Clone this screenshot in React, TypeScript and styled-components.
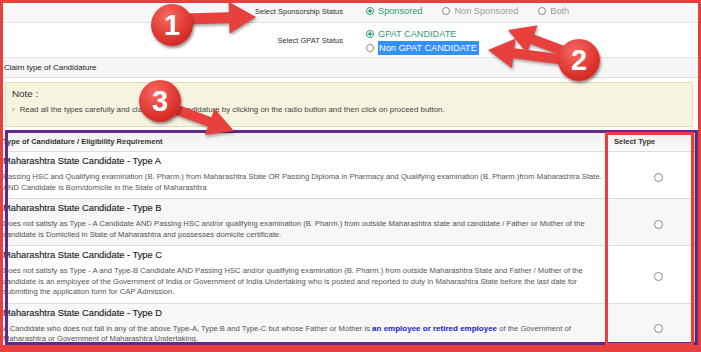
import React from "react";
import styled, { createGlobalStyle, css } from "styled-components";

const GlobalStyle = createGlobalStyle`
  html, body { margin: 0; padding: 0; background: #fff; }
  body { font-family: "Liberation Sans", Arial, sans-serif; }
`;

const GREEN = "#2f9d74";
const RED = "#e8403d";

const Page = styled.div`
  position: relative;
  width: 701px;
  height: 352px;
  overflow: hidden;
  background: #fff;
`;

const StatusRow = styled.div<{ $tone?: "gray"; $height: number }>`
  display: grid;
  grid-template-columns: 350px 1fr;
  height: ${({ $height }) => $height}px;
  box-sizing: border-box;
  border-bottom: 1px solid #e2e2e2;
  background: ${({ $tone }) => ($tone === "gray" ? "#f7f7f7" : "#fff")};
`;

const Label = styled.div`
  align-self: center;
  text-align: right;
  padding-right: 7px;
  font-size: 7.5px;
  color: #333;
`;

const Options = styled.div<{ $stacked?: boolean }>`
  display: flex;
  padding-left: 16px;
  ${({ $stacked }) =>
    $stacked
      ? css`
          flex-direction: column;
          padding-top: 4px;
        `
      : css`
          align-items: center;
          gap: 20px;
        `}
`;

const Option = styled.label<{ $checked?: boolean }>`
  display: inline-flex;
  align-items: center;
  gap: 4px;
  font-size: 9.2px;
  line-height: 14px;
  color: ${({ $checked }) => ($checked ? GREEN : "#9a9a9a")};
`;

const Radio = styled.span<{ $checked?: boolean }>`
  display: inline-block;
  flex: none;
  box-sizing: border-box;
  width: 8px;
  height: 8px;
  border-radius: 50%;
  border: 1.5px solid ${({ $checked }) => ($checked ? GREEN : "#888")};
  background: ${({ $checked }) =>
    $checked ? `radial-gradient(circle, ${GREEN} 0 1.4px, #fff 1.9px)` : "#fff"};
`;

const Selected = styled.span`
  background: #3390ff;
  color: #fff;
  padding: 0 2px 0 1px;
`;

const ClaimBar = styled.div`
  height: 20px;
  box-sizing: border-box;
  padding-left: 4px;
  line-height: 19px;
  font-size: 8px;
  color: #222;
  background: #f6f6f6;
  border-bottom: 1px solid #dcdcdc;
`;

const NoteBox = styled.div`
  margin: 4px 8px 0 5px;
  height: 45px;
  box-sizing: border-box;
  padding: 4px 8px 0 6px;
  background: #f6f4de;
  border: 1px solid #e2deb4;
`;

const NoteTitle = styled.div`
  font-size: 9.8px;
  line-height: 14px;
  color: #333;
`;

const NoteItem = styled.div`
  display: flex;
  gap: 5px;
  margin-top: 4px;
  font-size: 7.9px;
  line-height: 10px;
  color: #444;
`;

const Chevron = styled.span`
  color: #888;
`;

const TypeTable = styled.div`
  margin-top: 5px;
`;

const HeaderRow = styled.div`
  display: grid;
  grid-template-columns: 608px 1fr;
  height: 20px;
  box-sizing: border-box;
  align-items: center;
  font-size: 7.5px;
  font-weight: bold;
  color: #333;
  background: linear-gradient(#f0f0f0, #fafafa);
  border-bottom: 1px solid #dcdcdc;
`;

const HeadCell = styled.div<{ $inset: number }>`
  padding-left: ${({ $inset }) => $inset}px;
`;

const TypeRow = styled.div<{ $striped?: boolean }>`
  display: grid;
  grid-template-columns: 608px 1fr;
  border-bottom: 1px solid #dcdcdc;
  background: ${({ $striped }) => ($striped ? "#f7f7f7" : "#fff")};
`;

const DescCell = styled.div`
  padding: 3px 0 5px 3px;
`;

const TypeTitle = styled.div`
  font-size: 9.3px;
  line-height: 13px;
  color: #1e1e1e;
  margin-bottom: 4px;
  -webkit-text-stroke: 0.15px #1e1e1e;
`;

const TypeText = styled.div`
  font-size: 7.65px;
  line-height: 10.5px;
  color: #555;
`;

const Emphasis = styled.b`
  color: #2020d0;
  font-size: 8px;
`;

const SelectCell = styled.div`
  display: flex;
  align-items: center;
  padding: 4px 0 0 46px;
`;

const TypeRadio = styled.span`
  width: 9px;
  height: 9px;
  box-sizing: border-box;
  border-radius: 50%;
  border: 1.7px solid #8a8a8a;
  background: #fff;
`;

/* annotation layer */

const Frame = styled.div<{ $left: number; $top: number; $width: number; $height: number; $color: string; $shadow?: boolean }>`
  position: absolute;
  left: ${({ $left }) => $left}px;
  top: ${({ $top }) => $top}px;
  width: ${({ $width }) => $width}px;
  height: ${({ $height }) => $height}px;
  box-sizing: border-box;
  border: 3px solid ${({ $color }) => $color};
  pointer-events: none;
  ${({ $shadow }) => $shadow && css`box-shadow: 1px 2px 2px rgba(0, 0, 0, 0.35);`}
`;

const OuterFrame = styled.div`
  position: absolute;
  inset: 0;
  box-sizing: border-box;
  border: solid ${RED};
  border-width: 3px 3px 7px 3px;
  pointer-events: none;
`;

const ArrowLayer = styled.svg`
  position: absolute;
  left: 0;
  top: 0;
  pointer-events: none;
  filter: drop-shadow(1px 2px 1.5px rgba(0, 0, 0, 0.35));
`;

const Badge = styled.div<{ $x: number; $y: number }>`
  position: absolute;
  left: ${({ $x }) => $x - 21}px;
  top: ${({ $y }) => $y - 21}px;
  width: 42px;
  height: 42px;
  border-radius: 50%;
  display: flex;
  align-items: center;
  justify-content: center;
  background: radial-gradient(circle at 40% 30%, #f66a62, #dd322d 60%, #b9201c);
  box-shadow: 1px 2px 3px rgba(0, 0, 0, 0.45);
  color: #fff;
  font-size: 29px;
  font-weight: bold;
  font-family: "Liberation Sans", Arial, sans-serif;
`;

const arrow = (x1: number, y1: number, x2: number, y2: number, shaft = 10, headW = 30, headL = 26) => {
  const len = Math.hypot(x2 - x1, y2 - y1);
  const dx = (x2 - x1) / len;
  const dy = (y2 - y1) / len;
  const nx = -dy;
  const ny = dx;
  const bx = x2 - dx * headL;
  const by = y2 - dy * headL;
  const p = (x: number, y: number) => `${x.toFixed(1)},${y.toFixed(1)}`;
  return [
    p(x1 + (nx * shaft) / 2, y1 + (ny * shaft) / 2),
    p(bx + (nx * shaft) / 2, by + (ny * shaft) / 2),
    p(bx + (nx * headW) / 2, by + (ny * headW) / 2),
    p(x2, y2),
    p(bx - (nx * headW) / 2, by - (ny * headW) / 2),
    p(bx - (nx * shaft) / 2, by - (ny * shaft) / 2),
    p(x1 - (nx * shaft) / 2, y1 - (ny * shaft) / 2),
  ].join(" ");
};

const TYPES = [
  {
    title: "Maharashtra State Candidate - Type A",
    text: "Passing HSC and Qualifying examination (B. Pharm.) from Maharashtra State OR Passing Diploma in Pharmacy and Qualifying examination (B. Pharm.)from Maharashtra State. AND Candidate is Born/domicile in the State of Maharashtra",
  },
  {
    title: "Maharashtra State Candidate - Type B",
    text: "Does not satisfy as Type - A Candidate AND Passing HSC and/or qualifying examination (B. Pharm.) from outside Maharashtra state and candidate / Father or Mother of the candidate is Domiciled in State of Maharashtra and possesses domicile certificate.",
  },
  {
    title: "Maharashtra State Candidate - Type C",
    text: "Does not satisfy as Type - A and Type-B Candidate AND Passing HSC and/or qualifying examination (B. Pharm.) from outside Maharashtra State and Father / Mother of the candidate is an employee of the Government of India or Government of India Undertaking who is posted and reported to duty in Maharashtra State before the last date for submitting the application form for CAP Admission.",
  },
];

const App = () => {
  return (
    <Page>
      <GlobalStyle />
      <StatusRow $tone="gray" $height={23}>
        <Label>Select Sponsorship Status</Label>
        <Options>
          <Option $checked>
            <Radio $checked />
            Sponsored
          </Option>
          <Option>
            <Radio />
            Non Sponsored
          </Option>
          <Option>
            <Radio />
            Both
          </Option>
        </Options>
      </StatusRow>
      <StatusRow $height={35}>
        <Label>Select GPAT Status</Label>
        <Options $stacked>
          <Option $checked>
            <Radio $checked />
            GPAT CANDIDATE
          </Option>
          <Option>
            <Radio />
            <Selected>Non GPAT CANDIDATE</Selected>
          </Option>
        </Options>
      </StatusRow>
      <ClaimBar>Claim type of Candidature</ClaimBar>
      <NoteBox>
        <NoteTitle>Note :</NoteTitle>
        <NoteItem>
          <Chevron>›</Chevron>
          Read all the types carefully and claim type of candidature by clicking on the radio button and then click on proceed button.
        </NoteItem>
      </NoteBox>
      <TypeTable>
        <HeaderRow>
          <HeadCell $inset={3}>Type of Candidature / Eligibility Requirement</HeadCell>
          <HeadCell $inset={6}>Select Type</HeadCell>
        </HeaderRow>
        {TYPES.map((t, i) => (
          <TypeRow key={t.title} $striped={i % 2 === 1}>
            <DescCell>
              <TypeTitle>{t.title}</TypeTitle>
              <TypeText>{t.text}</TypeText>
            </DescCell>
            <SelectCell>
              <TypeRadio />
            </SelectCell>
          </TypeRow>
        ))}
        <TypeRow $striped>
          <DescCell>
            <TypeTitle>Maharashtra State Candidate - Type D</TypeTitle>
            <TypeText>
              A Candidate who does not fall in any of the above Type-A, Type B and Type-C but whose Father or Mother is{" "}
              <Emphasis>an employee or retired employee</Emphasis> of the Government of Maharashtra or Government of
              Maharashtra Undertaking.
            </TypeText>
          </DescCell>
          <SelectCell>
            <TypeRadio />
          </SelectCell>
        </TypeRow>
      </TypeTable>

      <Frame $left={5} $top={130} $width={693} $height={215} $color="#5e2b8c" />
      <Frame $left={605} $top={132} $width={89} $height={214} $color={RED} $shadow />
      <OuterFrame />
      <ArrowLayer width={701} height={352} viewBox="0 0 701 352">
        <polygon points={arrow(186, 19, 256, 17, 11, 32, 27)} fill={RED} />
        <polygon points={arrow(566, 52, 508, 30)} fill={RED} />
        <polygon points={arrow(566, 60, 488, 50)} fill={RED} />
        <polygon points={arrow(172, 108, 234, 131, 10, 28, 26)} fill={RED} />
      </ArrowLayer>
      <Badge $x={172} $y={25}>1</Badge>
      <Badge $x={579} $y={60}>2</Badge>
      <Badge $x={160} $y={101}>3</Badge>
    </Page>
  );
};

export default App;
